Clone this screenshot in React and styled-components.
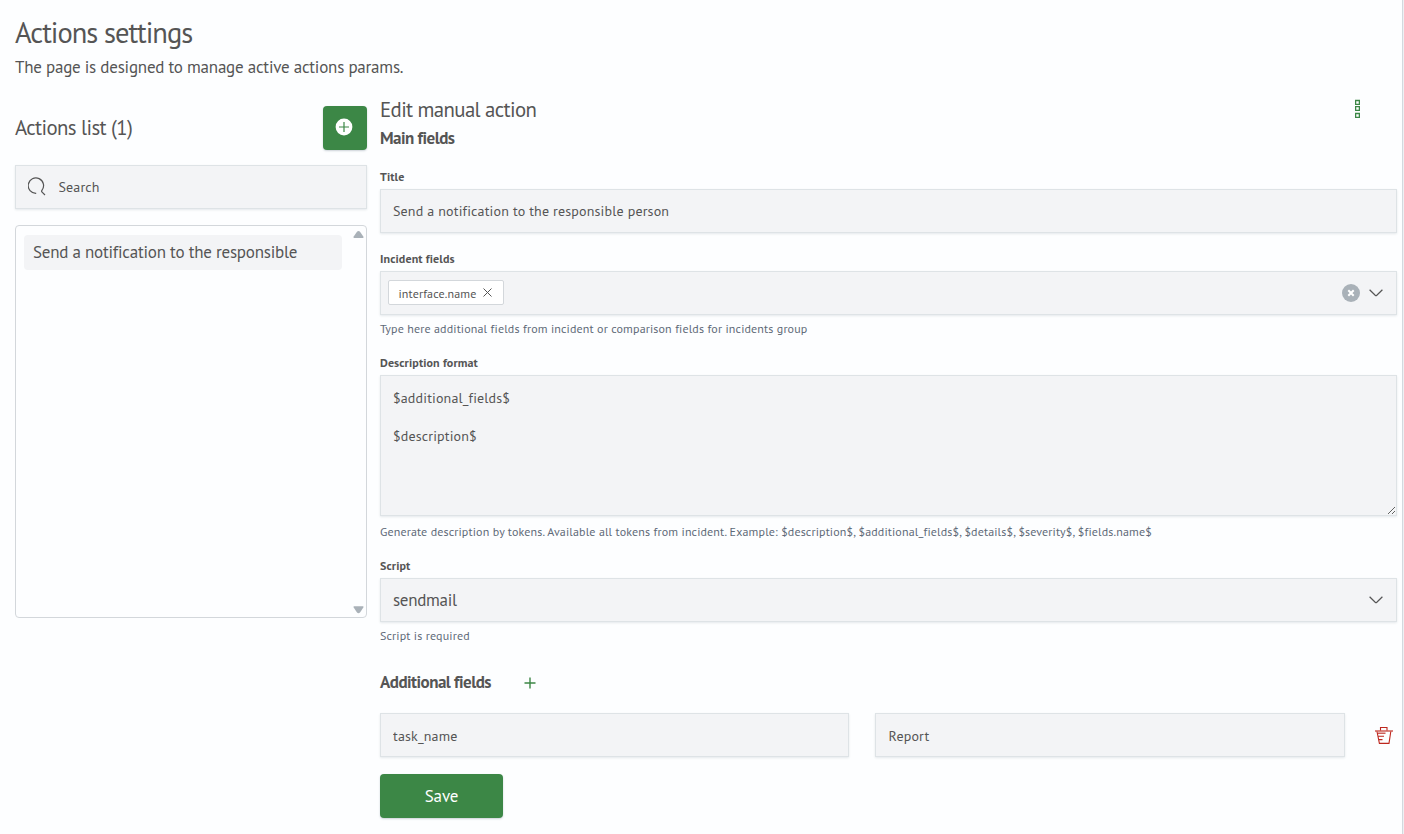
import React from 'react';
import styled, { createGlobalStyle, css } from 'styled-components';

const GlobalStyle = createGlobalStyle`
    * {
        box-sizing: border-box;
    }

    body {
        margin: 0;
        background-color: #fdfeff;
        color: #555;
        font-family: "PT Sans", "Open Sans", "Noto Sans", sans-serif;
        overflow: hidden;
    }
`

const Page = styled.div`
    width: 1403px;
    height: 834px;
    padding: 0 5px 0 15px;
    border-right: 1px solid #d3d9de;
    box-shadow: 1px 0 0 #eef0f3;
`

const PageTitle = styled.h1`
    margin: 0;
    padding-top: 13px;
    font-size: 28.5px;
    font-weight: 400;
    letter-spacing: -1px;
    line-height: 40px;
`

const PageText = styled.p`
    margin: 0;
    padding-top: 2px;
    font-size: 17px;
    letter-spacing: -.23px;
    line-height: 24px;
`

const Columns = styled.div`
    display: flex;
    gap: 13px;
    padding-top: 19px;
`

const Sidebar = styled.aside`
    width: 352px;
    padding-top: 8px;
`

const SidebarHead = styled.div`
    display: flex;
    align-items: center;
    justify-content: space-between;
    height: 44px;
`

const Heading = styled.h2`
    margin: 0;
    font-size: 20.8px;
    font-weight: 400;
    letter-spacing: -.6px;
    line-height: 24px;
`

const SubHeading = styled.h3`
    margin: 0;
    font-size: 17px;
    font-weight: 700;
    letter-spacing: -.52px;
    line-height: 24px;
`

const Button = styled.button`
    display: flex;
    align-items: center;
    justify-content: center;
    width: ${props => props.$square ? '44px' : '123px'};
    height: 44px;
    padding: ${props => props.$square ? '0 2px 2px 0' : '0'};
    border: none;
    border-radius: 4px;
    background-color: #3c8746;
    box-shadow: 0 1px 2px rgba(60, 80, 100, .25);
    color: #fff;
    font-family: inherit;
    font-size: 17px;
    letter-spacing: -.15px;
`

const box = css`
    border: 1px solid #dee3e6;
    background-color: #f3f4f6;
    box-shadow: 0 1px 2px rgba(60, 80, 100, .12);
`

const SearchBox = styled.div`
    ${box}
    display: flex;
    align-items: center;
    gap: 11.5px;
    height: 44px;
    margin-top: 15px;
    padding-left: 12px;

    svg {
        margin-bottom: 1px;
    }

    input {
        flex: 1;
        min-width: 0;
        padding: 0;
        border: none;
        outline: none;
        background: none;
        color: #555;
        font-family: inherit;
        font-size: 14px;
        letter-spacing: .14px;
    }

    input::placeholder {
        color: #555;
        opacity: 1;
    }
`

const List = styled.div`
    display: flex;
    justify-content: space-between;
    height: 393px;
    margin-top: 16px;
    padding: 9px 2px 3px 8px;
    border: 1px solid #d3d7db;
    border-radius: 4px;
`

const ListItem = styled.div`
    width: 318px;
    height: 35px;
    padding-left: 9px;
    border-radius: 4px;
    background-color: #f3f4f6;
    font-size: 17px;
    letter-spacing: -.23px;
    line-height: 35px;
`

const ScrollBar = styled.div`
    display: flex;
    flex-direction: column;
    justify-content: space-between;
    width: 11px;
    margin-top: -5px;
`

const Form = styled.main`
    flex: 1;
    min-width: 0;
`

const FormHead = styled.div`
    display: flex;
    justify-content: space-between;
    padding-right: 37px;

    svg {
        margin-top: 1px;
    }

    ${Heading} {
        margin-bottom: 4px;
    }
`

const Field = styled.div`
    padding-top: ${props => props.$top || 16}px;
`

const Label = styled.label`
    display: block;
    font-size: 12px;
    font-weight: 700;
    letter-spacing: .12px;
    line-height: 20px;
    padding-bottom: 2px;
`

const Hint = styled.p`
    margin: 0;
    padding-top: 5px;
    color: #5f6a78;
    font-size: 12px;
    letter-spacing: .145px;
    line-height: 18px;
`

const Input = styled.input`
    ${box}
    display: block;
    width: 100%;
    height: 44px;
    padding: 0 12px;
    outline: none;
    color: #555;
    font-family: inherit;
    font-size: 14px;
    letter-spacing: .16px;
`

const Textarea = styled.textarea`
    ${box}
    display: block;
    width: 100%;
    height: 141px;
    margin-bottom: 7px;
    padding: 13px 12px;
    outline: none;
    color: #555;
    font-family: inherit;
    font-size: 14px;
    letter-spacing: .15px;
    line-height: 19px;

    + ${Hint} {
        padding-top: 0;
    }
`

const Select = styled.div`
    ${box}
    display: flex;
    align-items: center;
    height: 44px;
    padding: 0 13px 0 ${props => props.$multi ? '7px' : '12px'};
    font-size: 17px;
    letter-spacing: -.3px;
`

const SelectIcons = styled.div`
    display: flex;
    align-items: center;
    gap: 9px;
    margin-left: auto;
`

const Tag = styled.span`
    display: flex;
    align-items: center;
    gap: 7px;
    height: 25px;
    margin-bottom: 2px;
    padding: 3px 11px 0 9.5px;
    border: 1px solid #d3d7db;
    border-radius: 2px;
    background-color: #fff;
    font-size: 12px;
    letter-spacing: .15px;

    svg {
        margin-top: -3px;
    }
`

const ExtraHead = styled.div`
    display: flex;
    align-items: center;
    gap: 33px;
    padding-top: 25px;

    svg {
        margin-top: 1px;
    }
`

const ExtraRow = styled.div`
    display: grid;
    grid-template-columns: 469px 470px 18px;
    column-gap: 26px;
    align-items: center;
    padding: 19px 0 17px;

    ${Input} {
        padding-top: 2px;
    }

    ${Input} + ${Input} {
        padding-left: 12.6px;
    }

    svg {
        margin-left: 4px;
    }
`

function Chevron () {
    return (
        <svg width="14" height="8" viewBox="0 0 14 8" fill="none" stroke="#555" strokeWidth="1.2">
            <path d="M.6 .8 L6.2 6.3 Q7 7 7.8 6.3 L13.4 .8" />
        </svg>
    )
}

function Arrow ({down}) {
    return (
        <svg width="11" height="9" viewBox="0 0 11 9" fill="#a9b1b8">
            <path d={down ? 'M1 1.2H10Q11 1.4 10.3 2.6L7.2 7.3Q5.5 9 3.8 7.3L.7 2.6Q0 1.4 1 1.2Z' : 'M1 8H10Q11 7.8 10.3 6.6L7.2 2Q5.5 .2 3.8 2L.7 6.6Q0 7.8 1 8Z'} />
        </svg>
    )
}

function App () {
    return (
        <>
            <GlobalStyle />
            <Page>
                <PageTitle>Actions settings</PageTitle>
                <PageText>The page is designed to manage active actions params.</PageText>
                <Columns>
                    <Sidebar>
                        <SidebarHead>
                            <Heading>Actions list (1)</Heading>
                            <Button $square>
                                <svg width="18" height="18" viewBox="0 0 18 18">
                                    <circle cx="9" cy="9" r="8.4" fill="#fff" />
                                    <path d="M9 4V14M4 9H14" stroke="#3c8746" strokeWidth="1.2" />
                                </svg>
                            </Button>
                        </SidebarHead>
                        <SearchBox>
                            <svg width="19" height="19" viewBox="0 0 19 19" fill="none" stroke="#555" strokeWidth="1.2">
                                <path d="M8.2 16.3A7.7 7.7 0 1 1 13.9 13.4C13.3 14.2 13.5 14.6 14.1 15.2L17 18" />
                            </svg>
                            <input placeholder="Search" />
                        </SearchBox>
                        <List>
                            <ListItem>Send a notification to the responsible</ListItem>
                            <ScrollBar>
                                <Arrow />
                                <Arrow down />
                            </ScrollBar>
                        </List>
                    </Sidebar>
                    <Form>
                        <FormHead>
                            <div>
                                <Heading>Edit manual action</Heading>
                                <SubHeading>Main fields</SubHeading>
                            </div>
                            <svg width="5" height="19" viewBox="0 0 5 19" fill="none" stroke="#3c8746" strokeWidth="1.3">
                                <path d="M.6 1.5H4.4V5.4H.6ZM.6 7.6H4.4V11.4H.6ZM.6 14.5H4.4V18.4H.6Z" />
                            </svg>
                        </FormHead>
                        <Field $top={17}>
                            <Label>Title</Label>
                            <Input defaultValue="Send a notification to the responsible person" />
                        </Field>
                        <Field>
                            <Label>Incident fields</Label>
                            <Select $multi>
                                <Tag>
                                    interface.name
                                    <svg width="9" height="9" viewBox="0 0 9 9" stroke="#555">
                                        <path d="M.5 .5L8.5 8.5M8.5 .5L.5 8.5" />
                                    </svg>
                                </Tag>
                                <SelectIcons>
                                    <svg width="18" height="18" viewBox="0 0 18 18">
                                        <circle cx="9" cy="9" r="9" fill="#a9b1b8" />
                                        <path d="M6.3 6.3L11.7 11.7M11.7 6.3L6.3 11.7" stroke="#fff" strokeWidth="2" />
                                    </svg>
                                    <Chevron />
                                </SelectIcons>
                            </Select>
                            <Hint>Type here additional fields from incident or comparison fields for incidents group</Hint>
                        </Field>
                        <Field $top={15}>
                            <Label>Description format</Label>
                            <Textarea defaultValue={'$additional_fields$\n\n$description$'} />
                            <Hint>Generate description by tokens. Available all tokens from incident. Example: $description$, $additional_fields$, $details$, $severity$, $fields.name$</Hint>
                        </Field>
                        <Field $top={15}>
                            <Label>Script</Label>
                            <Select>
                                sendmail
                                <SelectIcons>
                                    <Chevron />
                                </SelectIcons>
                            </Select>
                            <Hint>Script is required</Hint>
                        </Field>
                        <ExtraHead>
                            <SubHeading>Additional fields</SubHeading>
                            <svg width="12" height="12" viewBox="0 0 12 12" stroke="#3c8746" strokeWidth="1.4">
                                <path d="M6 .5V11.5M.5 6H11.5" />
                            </svg>
                        </ExtraHead>
                        <ExtraRow>
                            <Input defaultValue="task_name" />
                            <Input defaultValue="Report" />
                            <svg width="18" height="17" viewBox="0 0 18 17" fill="none" stroke="#bd271e">
                                <path d="M5.5 3.5V.5H12V3.5M2 4.5L4.4 16.4H14L15.8 4.5M3.5 9.3H9M4 12.6H7.5" strokeWidth="1.1" />
                                <path d="M0 4H18M3 6.2H10.5" strokeWidth="1.6" strokeOpacity=".75" />
                            </svg>
                        </ExtraRow>
                        <Button>Save</Button>
                    </Form>
                </Columns>
            </Page>
        </>
    )
}

export default App;
